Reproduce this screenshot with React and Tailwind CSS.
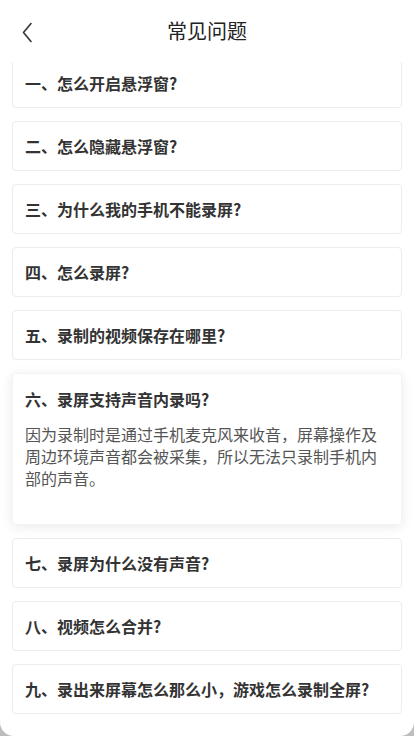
import React from "react";

const faqs = [
  { q: "一、怎么开启悬浮窗?" },
  { q: "二、怎么隐藏悬浮窗?" },
  { q: "三、为什么我的手机不能录屏?" },
  { q: "四、怎么录屏?" },
  { q: "五、录制的视频保存在哪里?" },
  {
    q: "六、录屏支持声音内录吗?",
    a: "因为录制时是通过手机麦克风来收音，屏幕操作及周边环境声音都会被采集，所以无法只录制手机内部的声音。",
  },
  { q: "七、录屏为什么没有声音?" },
  { q: "八、视频怎么合并?" },
  { q: "九、录出来屏幕怎么那么小，游戏怎么录制全屏?" },
];

function App() {
  return (
    <div
      className="w-[414px] h-[736px] bg-[#bdbdbd] overflow-hidden"
      style={{ fontFamily: '"Noto Sans CJK SC", "Noto Sans", sans-serif' }}
    >
      <div className="w-full h-full bg-white rounded-b-[14px] flex flex-col overflow-hidden">
        {/* header */}
        <div className="relative h-[62px] shrink-0 flex items-center justify-center bg-white z-10">
          <button className="absolute left-[18px] top-[20px] w-[18px] h-[24px] flex items-center justify-center">
            <svg width="12" height="21" viewBox="0 0 12 21" fill="none">
              <path d="M10 1.5 L2.5 10.5 L10 19.5" stroke="#333" strokeWidth="1.6" strokeLinecap="round" strokeLinejoin="round" />
            </svg>
          </button>
          <h1 className="text-[20px] text-[#222] leading-none">常见问题</h1>
        </div>

        {/* list */}
        <div className="flex-1 overflow-hidden">
          <div className="-mt-[4px] px-[12px] flex flex-col gap-[13px]">
            {faqs.map((item, i) => (
              <div
                key={i}
                className={`bg-white border border-[#ececec] rounded-[4px] px-[12px] ${
                  item.a
                    ? "pt-[14px] pb-[35px] shadow-[0_2px_12px_rgba(0,0,0,0.09)] border-[#f3f3f3]"
                    : "h-[50px] flex items-center"
                }`}
              >
                <p className="text-[16px] leading-[22px] font-bold text-[#333]">{item.q}</p>
                {item.a && (
                  <p className="mt-[13px] text-[16px] leading-[22px] text-[#555]">{item.a}</p>
                )}
              </div>
            ))}
          </div>
        </div>
      </div>
    </div>
  );
}

export default App;
